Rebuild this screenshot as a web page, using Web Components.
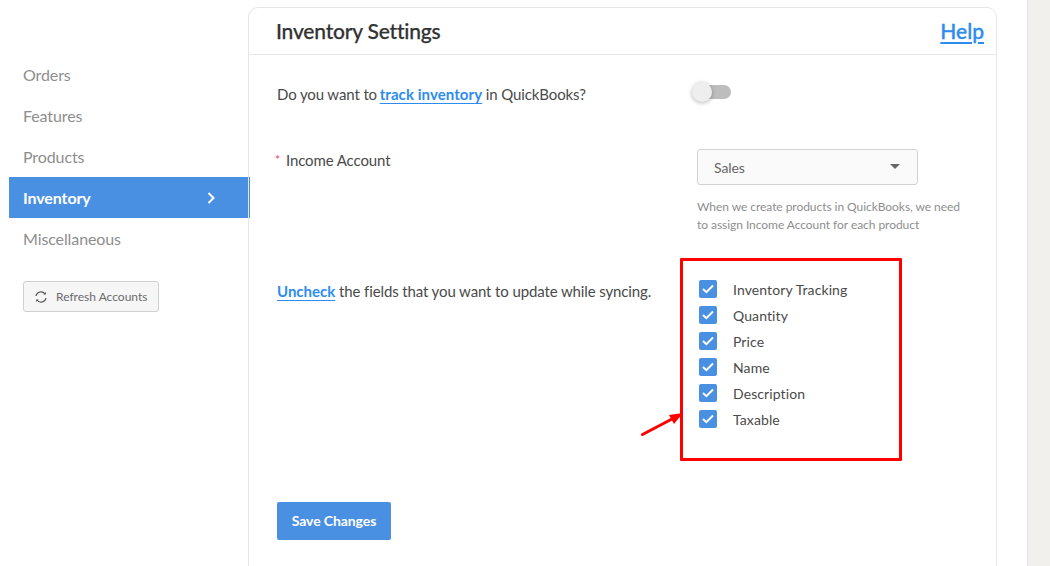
<!DOCTYPE html>
<html>
<head>
<meta charset="utf-8">
<title>Inventory Settings</title>
<style>
html, body { margin: 0; height: 566px; overflow: hidden; background: #fff; }
body { font-family: Lato, "Liberation Sans", sans-serif; color: #4a4a4a; }
</style>
</head>
<body>
<settings-page></settings-page>

<script>
class NavItem extends HTMLElement {
    constructor() {
        super();
        this.attachShadow({mode: 'open'});
        this.shadowRoot.innerHTML = `<style>
        :host { display: flex; align-items: center; justify-content: space-between; box-sizing: border-box; height: 41px; padding: 0 34px 0 14px; font-size: 16px; letter-spacing: -.1px; color: #8e8e8e; }
        :host([active]) { background: #4a90e2; color: #fff; font-weight: 700; margin-right: -1px; padding-right: 35px; }
        svg { display: none; }
        :host([active]) svg { display: block; }
        </style>
        <slot></slot>
        <svg width="8" height="12" viewBox="0 0 8 12"><path d="M1.5 1l5 5-5 5" fill="none" stroke="#fff" stroke-width="2"/></svg>`;
    }
}

class SideBar extends HTMLElement {
    constructor() {
        super();
        this.attachShadow({mode: 'open'});
        this.shadowRoot.innerHTML = `<style>
        :host { display: block; box-sizing: border-box; width: 240px; margin-left: 9px; padding-top: 54px; flex: none; }
        button { display: flex; align-items: center; gap: 8px; box-sizing: border-box; width: 136px; height: 31px; margin: 22px 0 0 14px; padding: 0 0 0 10px; border: 1px solid #cfcfcf; border-radius: 3px; background: #f6f6f7; font: 12px Lato, sans-serif; color: #6b6b6b; }
        </style>
        <nav><slot></slot></nav>
        <button>
          <svg width="14" height="14" viewBox="0 0 14 14" fill="none" stroke="#555" stroke-width="1.2">
            <path d="M2 6a5 5 0 0 1 9-2"/><path d="M12 8a5 5 0 0 1-9 2"/>
            <path d="M9.3 4.6h2.5l.2-2.6z" fill="#555" stroke="none"/><path d="M4.7 9.4H2.2L2 12z" fill="#555" stroke="none"/>
          </svg>
          Refresh Accounts
        </button>`;
    }
}

class ToggleSwitch extends HTMLElement {
    constructor() {
        super();
        this.attachShadow({mode: 'open'});
        this.shadowRoot.innerHTML = `<style>
        :host { display: block; position: relative; width: 40px; height: 20px; }
        .track { position: absolute; left: 4px; top: 3px; width: 35px; height: 14px; border-radius: 7px; background: #bdbdbd; }
        .knob { position: absolute; left: 0; top: 0; width: 20px; height: 20px; border-radius: 50%; background: #eee; box-shadow: 0 1px 4px rgba(0,0,0,.3); }
        </style>
        <div class="track"></div><div class="knob"></div>`;
    }
}

class SelectBox extends HTMLElement {
    constructor() {
        super();
        this.attachShadow({mode: 'open'});
        this.shadowRoot.innerHTML = `<style>
        :host { display: flex; align-items: center; justify-content: space-between; box-sizing: border-box; width: 221px; height: 36px; padding: 1px 17px 0 16px; border: 1px solid #d2d2d2; border-radius: 3px; background: #fafafa; font-size: 14px; color: #666; }
        i { width: 0; height: 0; border: 5px solid transparent; border-top: 5px solid #666; border-bottom: 0; margin-top: -2px; }
        </style>
        <slot></slot><i></i>`;
    }
}

class CheckRow extends HTMLElement {
    constructor() {
        super();
        this.attachShadow({mode: 'open'});
        this.shadowRoot.innerHTML = `<style>
        :host { display: flex; align-items: center; height: 26px; gap: 16px; font-size: 14px; letter-spacing: .1px; color: #4a4a4a; }
        .box { width: 18px; height: 18px; border-radius: 2px; background: #4a90e2; display: flex; align-items: center; justify-content: center; margin-top: -1px; }
        </style>
        <div class="box"><svg width="12" height="10" viewBox="0 0 12 10"><path d="M1 5l3.4 3.2L11 1.5" fill="none" stroke="#fff" stroke-width="2"/></svg></div>
        <span><slot></slot></span>`;
    }
}

class SettingsCard extends HTMLElement {
    constructor() {
        super();
        this.attachShadow({mode: 'open'});
        this.shadowRoot.innerHTML = `<style>
        :host { display: block; box-sizing: border-box; width: 749px; height: 600px; margin-top: 7px; margin-left: -1px; border: 1px solid #e6e6e6; border-radius: 10px; flex: none; }
        header { display: flex; align-items: center; justify-content: space-between; box-sizing: border-box; height: 47px; padding: 0 12px 2px 27px; border-bottom: 1px solid #e8e8e8; }
        h1 { margin: 0; font-size: 21px; font-weight: 500; letter-spacing: -.2px; -webkit-text-stroke: .25px #333; color: #333; }
        a { color: #2d8cf0; font-weight: 700; text-decoration: underline; text-underline-offset: 3px; letter-spacing: 0; }
        .help { font-size: 21px; font-weight: 500; -webkit-text-stroke: .35px #2d8cf0; }
        .track { margin-left: -1px; letter-spacing: .07px; }
        main { padding-left: 28px; }
        .row { display: grid; grid-template-columns: 420px 1fr; font-size: 15px; letter-spacing: -.12px; color: #4a4a4a; }
        .r1 { padding-top: 30px; height: 38px; }
        .r2 { padding-top: 26px; }
        .r3 { padding-top: 29px; }
        .tog { margin-left: -5px; margin-top: -3px; }
        .label { padding-top: 2px; }
        .star { color: #e8465a; font-size: 12px; margin: 0 6px 0 -2px; vertical-align: 2px; }
        .hint { margin: 13px 0 0; width: 270px; font-size: 12px; line-height: 18px; letter-spacing: -.05px; color: #8e8e8e; }
        .uncheck { padding-top: 19px; }
        .checks { margin: -4px 0 0 2px; padding-top: 17px; }
        .save { display: block; box-sizing: border-box; width: 114px; height: 38px; margin-top: 70px; padding: 0 0 2px; border: 0; border-radius: 2px; background: #4a90e2; color: #fff; font: 700 14px Lato, sans-serif; letter-spacing: -.1px; }
        </style>
        <header><h1>Inventory Settings</h1><a class="help" href="#">Help</a></header>
        <main>
          <div class="row r1">
            <div>Do you want to <a class="track" href="#">track inventory</a> in QuickBooks?</div>
            <toggle-switch class="tog"></toggle-switch>
          </div>
          <div class="row r2">
            <div class="label"><span class="star">*</span>Income Account</div>
            <div>
              <select-box>Sales</select-box>
              <p class="hint">When we create products in QuickBooks, we need to assign Income Account for each product</p>
            </div>
          </div>
          <div class="row r3">
            <div class="uncheck"><a href="#">Uncheck</a> the fields that you want to update while syncing.</div>
            <div class="checks">
              <check-row>Inventory Tracking</check-row>
              <check-row>Quantity</check-row>
              <check-row>Price</check-row>
              <check-row>Name</check-row>
              <check-row>Description</check-row>
              <check-row>Taxable</check-row>
            </div>
          </div>
          <button class="save">Save Changes</button>
        </main>`;
    }
}

class RedCallout extends HTMLElement {
    constructor() {
        super();
        this.attachShadow({mode: 'open'});
        // annotation drawn over the screenshot, so it sits on absolute coords
        this.shadowRoot.innerHTML = `<style>
        :host { display: block; }
        .frame { position: absolute; left: 680px; top: 258px; width: 222px; height: 203px; box-sizing: border-box; border: 3px solid #f00; border-radius: 1px; }
        svg { position: absolute; left: 638px; top: 405px; }
        </style>
        <div class="frame"></div>
        <svg width="48" height="36" viewBox="0 0 48 36"><path d="M4.5 29.5L34 14" stroke="#f00" stroke-width="3" fill="none" stroke-linecap="round"/><path d="M45 8L31 10l5 9z" fill="#f00"/></svg>`;
    }
}

class SettingsPage extends HTMLElement {
    constructor() {
        super();
        this.attachShadow({mode: 'open'});
        this.shadowRoot.innerHTML = `<style>
        :host { display: flex; position: relative; width: 1050px; height: 566px; overflow: hidden; }
        .gutter { flex: 1; margin-left: 30px; border-left: 1px solid #e4e4e2; background: #f1f0ed; }
        </style>
        <side-bar>
          <nav-item>Orders</nav-item>
          <nav-item>Features</nav-item>
          <nav-item>Products</nav-item>
          <nav-item active>Inventory</nav-item>
          <nav-item>Miscellaneous</nav-item>
        </side-bar>
        <settings-card></settings-card>
        <div class="gutter"></div>
        <red-callout></red-callout>`;
    }
}

customElements.define('nav-item', NavItem);
customElements.define('side-bar', SideBar);
customElements.define('toggle-switch', ToggleSwitch);
customElements.define('select-box', SelectBox);
customElements.define('check-row', CheckRow);
customElements.define('settings-card', SettingsCard);
customElements.define('red-callout', RedCallout);
customElements.define('settings-page', SettingsPage);
</script>
</body>
</html>
